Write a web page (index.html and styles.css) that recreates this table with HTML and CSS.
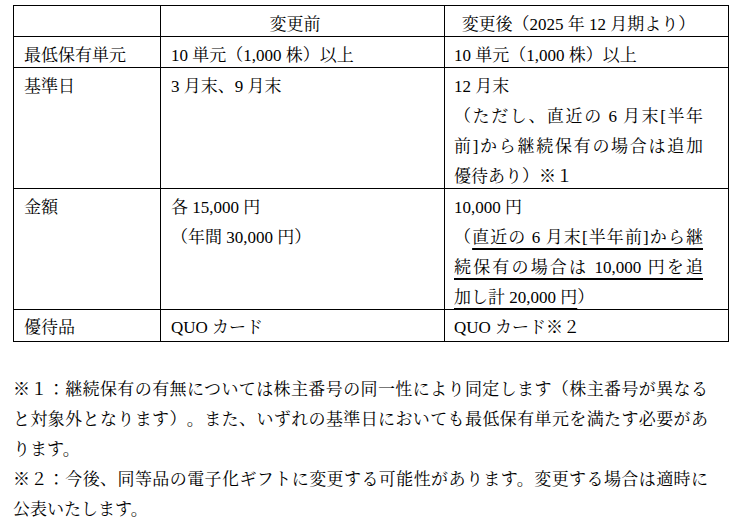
FILE: index.html
```html
<!DOCTYPE html>
<html lang="ja">
<head>
<meta charset="utf-8">
<title>株主優待制度の変更</title>
<link rel="stylesheet" href="styles.css">
</head>
<body>
<div class="page">
  <table class="tbl">
    <colgroup><col class="c1"><col class="c2"><col class="c3"></colgroup>
    <tr>
      <td><div class="in"></div></td>
      <td class="center"><div class="in">変更前</div></td>
      <td class="center"><div class="in">変更後（2025 年 12 月期より）</div></td>
    </tr>
    <tr>
      <td><div class="in">最低保有単元</div></td>
      <td><div class="in">10 単元（1,000 株）以上</div></td>
      <td><div class="in">10 単元（1,000 株）以上</div></td>
    </tr>
    <tr>
      <td><div class="in">基準日</div></td>
      <td><div class="in">3 月末、9 月末</div></td>
      <td><div class="in">
        <div>12 月末</div>
        <div class="j">（ただし、直近の 6 月末[半年</div>
        <div class="j">前]から継続保有の場合は追加</div>
        <div>優待あり）※１</div>
      </div></td>
    </tr>
    <tr>
      <td><div class="in">金額</div></td>
      <td><div class="in">
        <div>各 15,000 円</div>
        <div>（年間 30,000 円）</div>
      </div></td>
      <td><div class="in">
        <div>10,000 円</div>
        <div class="j">（<span class="u">直近の 6 月末[半年前]から継</span></div>
        <div class="j"><span class="u">続保有の場合は 10,000 円を追</span></div>
        <div><span class="u">加し計 20,000 円</span>）</div>
      </div></td>
    </tr>
    <tr class="last">
      <td><div class="in">優待品</div></td>
      <td><div class="in">QUO カード</div></td>
      <td><div class="in">QUO カード※２</div></td>
    </tr>
  </table>

  <div class="notes">
    <p>※１：継続保有の有無については株主番号の同一性により同定します（株主番号が異なると対象外となります）。また、いずれの基準日においても最低保有単元を満たす必要があります。</p>
    <p>※２：今後、同等品の電子化ギフトに変更する可能性があります。変更する場合は適時に公表いたします。</p>
  </div>
</div>
</body>
</html>
```
FILE: styles.css
```css
html, body {
  margin: 0;
  padding: 0;
  background: #ffffff;
}

body {
  font-family: "Liberation Serif", "Noto Serif CJK JP", "Noto Sans CJK JP", serif;
  font-size: 17px;
  line-height: 30px;
  color: #000000;
  text-spacing-trim: space-all;
}

.page {
  padding: 5px 0 0 13px;
}

.tbl {
  border-collapse: collapse;
  table-layout: fixed;
  width: 715px;
}

.c1 { width: 147px; }
.c2 { width: 284px; }
.c3 { width: 284px; }

.tbl td {
  border: 1px solid #000000;
  padding: 0 25px 0 10px;
  vertical-align: top;
}

.tbl td + td + td {
  padding-left: 9px;
}

.in {
  margin: 4px 0 -4px;
  min-height: 30px;
}

.last .in {
  margin: 3px 0 -2px;
}

.center {
  text-align: center;
}

.j {
  text-align: justify;
  text-align-last: justify;
}

.u {
  text-decoration: underline;
  text-decoration-thickness: 2px;
  text-underline-offset: 5px;
}

.notes {
  margin-top: 33px;
  width: 695px;
}

.notes p {
  margin: 0;
  text-align: justify;
}
```
